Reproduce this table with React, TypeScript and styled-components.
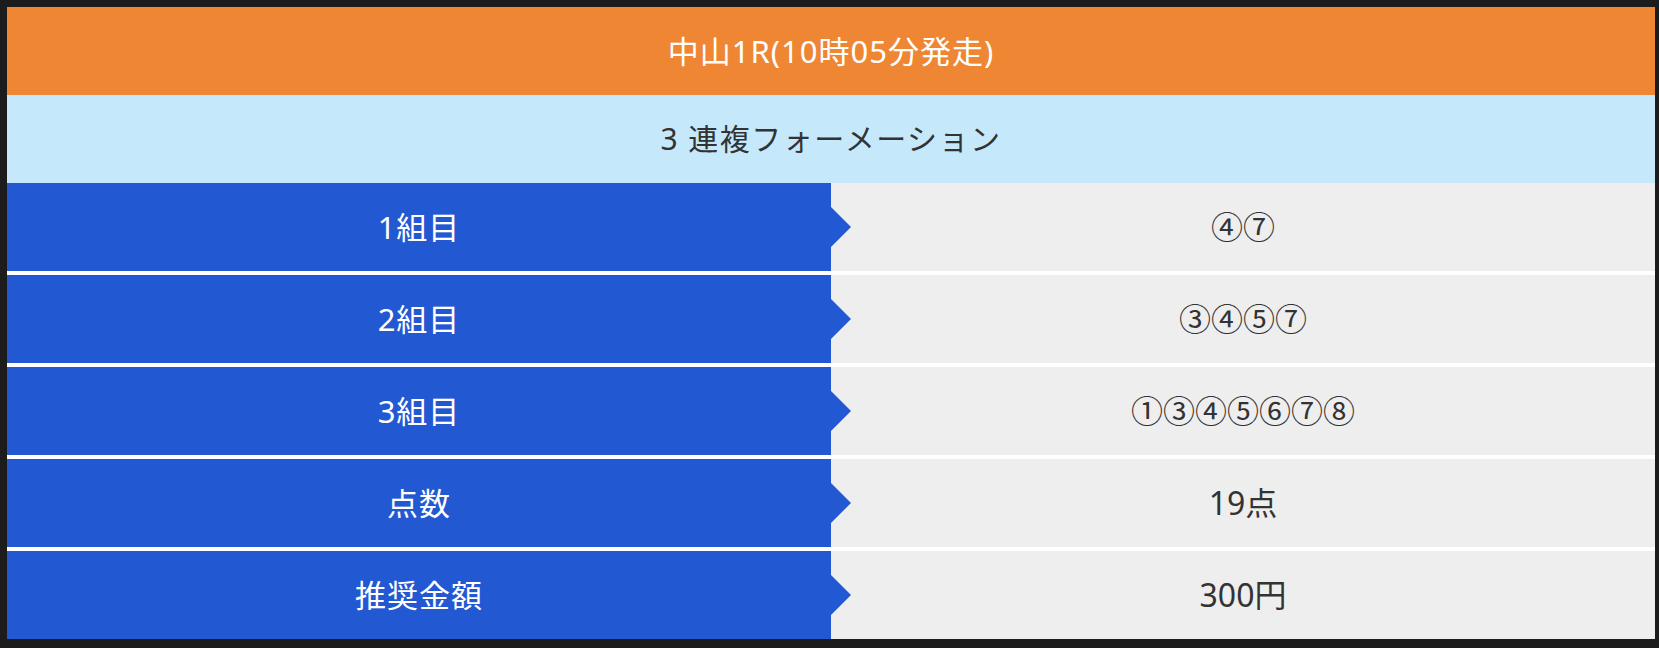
import styled, { createGlobalStyle } from "styled-components";

const GlobalStyle = createGlobalStyle`
  html, body {
    margin: 0;
    padding: 0;
    background: #1c1c1c;
  }
  body {
    font-family: "Noto Sans", "Noto Sans CJK JP", sans-serif;
  }
`;

type BetRow = { label: string; value: string };

const rows: BetRow[] = [
  { label: "1組目", value: "④⑦" },
  { label: "2組目", value: "③④⑤⑦" },
  { label: "3組目", value: "①③④⑤⑥⑦⑧" },
  { label: "点数", value: "19点" },
  { label: "推奨金額", value: "300円" },
];

const Frame = styled.div`
  padding: 7px 4px 9px 7px;
`;

const Table = styled.div`
  display: flex;
  flex-direction: column;
  width: 1648px;
`;

const Cell = styled.div`
  display: flex;
  align-items: center;
  justify-content: center;
  box-sizing: border-box;
  height: 88px;
  padding-bottom: 4px;
  font-size: 31px;
  letter-spacing: 1px;
`;

const Title = styled(Cell)`
  background: #ef8634;
  color: #fff;
`;

const Subtitle = styled(Cell)`
  background: #c5e9fb;
  color: #333;
  font-size: 30px;
  letter-spacing: 1.5px;
`;

const Rows = styled.div`
  display: flex;
  flex-direction: column;
  gap: 4px;
  background: #fff;
`;

const Row = styled.div`
  display: grid;
  grid-template-columns: 1fr 1fr;
`;

const Label = styled(Cell)`
  position: relative;
  background: #2358d3;
  color: #fff;

  &::after {
    content: "";
    position: absolute;
    right: -20px;
    top: 50%;
    transform: translateY(-50%);
    border-top: 20px solid transparent;
    border-bottom: 20px solid transparent;
    border-left: 20px solid #2358d3;
  }
`;

const Value = styled(Cell)`
  background: #eeeeee;
  color: #333;
  font-size: 32px;
  letter-spacing: 0;
`;

export default function App() {
  return (
    <>
      <GlobalStyle />
      <Frame>
        <Table>
          <Title>中山1R(10時05分発走)</Title>
          <Subtitle>3 連複フォーメーション</Subtitle>
          <Rows>
            {rows.map(row => (
              <Row key={row.label}>
                <Label>{row.label}</Label>
                <Value>{row.value}</Value>
              </Row>
            ))}
          </Rows>
        </Table>
      </Frame>
    </>
  );
}
